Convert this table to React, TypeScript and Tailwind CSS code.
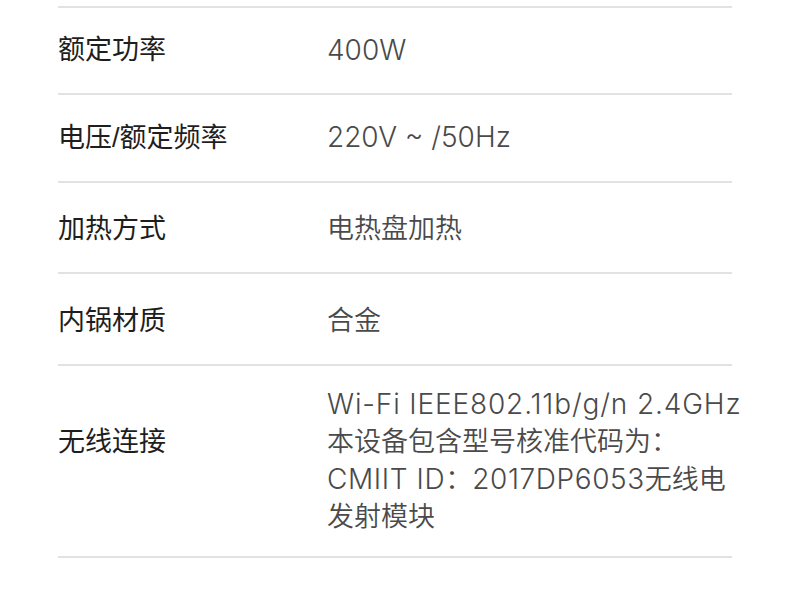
import React from 'react';

const cjk = '"Liberation Sans", "Noto Sans CJK SC", sans-serif';

// Latin runs in the reference render larger and thinner than the CJK glyphs beside them
const L: React.FC<{ children: React.ReactNode; className?: string }> = ({ children, className }) => (
  <span
    className={`text-[28px] font-light ${className ?? ''}`}
    style={{ fontFamily: 'Inter, "Noto Sans CJK SC", sans-serif' }}
  >
    {children}
  </span>
);

const rows: { label: React.ReactNode; value: React.ReactNode[]; h: string; lab?: string }[] = [
  { label: '额定功率', value: [<L>400W</L>], h: 'h-[87px]' },
  { label: '电压/额定频率', value: [<L>220V ~ /50Hz</L>], h: 'h-[88px]' },
  { label: '加热方式', value: ['电热盘加热'], h: 'h-[91px] pt-[4px]' },
  { label: '内锅材质', value: ['合金'], h: 'h-[92px] pt-[4px]' },
  {
    label: '无线连接',
    value: [
      <L className="tracking-[0.85px]">Wi-Fi IEEE802.11b/g/n 2.4GHz</L>,
      '本设备包含型号核准代码为：',
      <>
        <L className="tracking-[0.6px]">CMIIT ID</L>：<L className="tracking-[0.6px]">2017DP6053</L>无线电
      </>,
      '发射模块',
    ],
    h: 'h-[192px]',
    lab: '-mt-[38px]',
  },
];

const App: React.FC = () => {
  return (
    <div className="w-[790px] h-[590px] bg-white pt-[6px]" style={{ fontFamily: cjk }}>
      <div className="ml-[58px] w-[674px] border-t-2 border-[#e2e2e2]">
        {rows.map((r, idx) => (
          <div
            key={idx}
            className={`flex items-center border-b-2 border-[#e2e2e2] ${r.h}`}
          >
            <div className={`w-[269px] shrink-0 text-[27px] leading-[37px] text-[#1e1e1e] ${r.lab ?? ''}`}>
              {r.label}
            </div>
            <div className="flex flex-col text-[27px] leading-[37px] font-[350] text-[#4a4a4a] whitespace-nowrap">
              {r.value.map((v, i) => (
                <div key={i}>{v}</div>
              ))}
            </div>
          </div>
        ))}
      </div>
    </div>
  );
};

export default App;
